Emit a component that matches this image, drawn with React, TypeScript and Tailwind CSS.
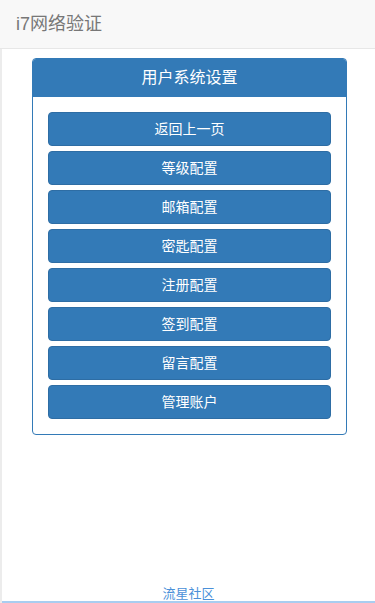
const items = ["返回上一页", "等级配置", "邮箱配置", "密匙配置", "注册配置", "签到配置", "留言配置", "管理账户"]

export default function App() {
  return (
    <div
      className="flex h-[603px] w-[375px] flex-col overflow-hidden bg-white"
      style={{ fontFamily: '"Liberation Sans", "Noto Sans CJK SC", sans-serif' }}
    >
      <div className="flex h-[49px] shrink-0 items-center border-b border-[#e7e7e7] bg-[#f8f8f8] px-4">
        <span className="text-[18px] text-[#777]">i7网络验证</span>
      </div>

      <div className="flex flex-1 flex-col border-l-2 border-[#ececec]">
        <div className="ml-[30px] mr-[28px] mt-[9px] rounded border border-[#337ab7]">
          <div className="flex h-[38px] items-center justify-center rounded-t-[3px] bg-[#337ab7] text-[16px] text-white">
            用户系统设置
          </div>
          <div className="flex flex-col gap-[5px] p-[15px]">
            {items.map((label) => (
              <button
                key={label}
                className="h-[34px] rounded border border-[#2e6da4] bg-[#337ab7] text-[14px] text-white"
              >
                {label}
              </button>
            ))}
          </div>
        </div>

        <div className="mt-auto flex justify-center border-b-2 border-[#a9cdf0]">
          <span className="text-[13px] leading-[14px] text-[#4a90d9]">流星社区</span>
        </div>
      </div>
    </div>
  )
}
